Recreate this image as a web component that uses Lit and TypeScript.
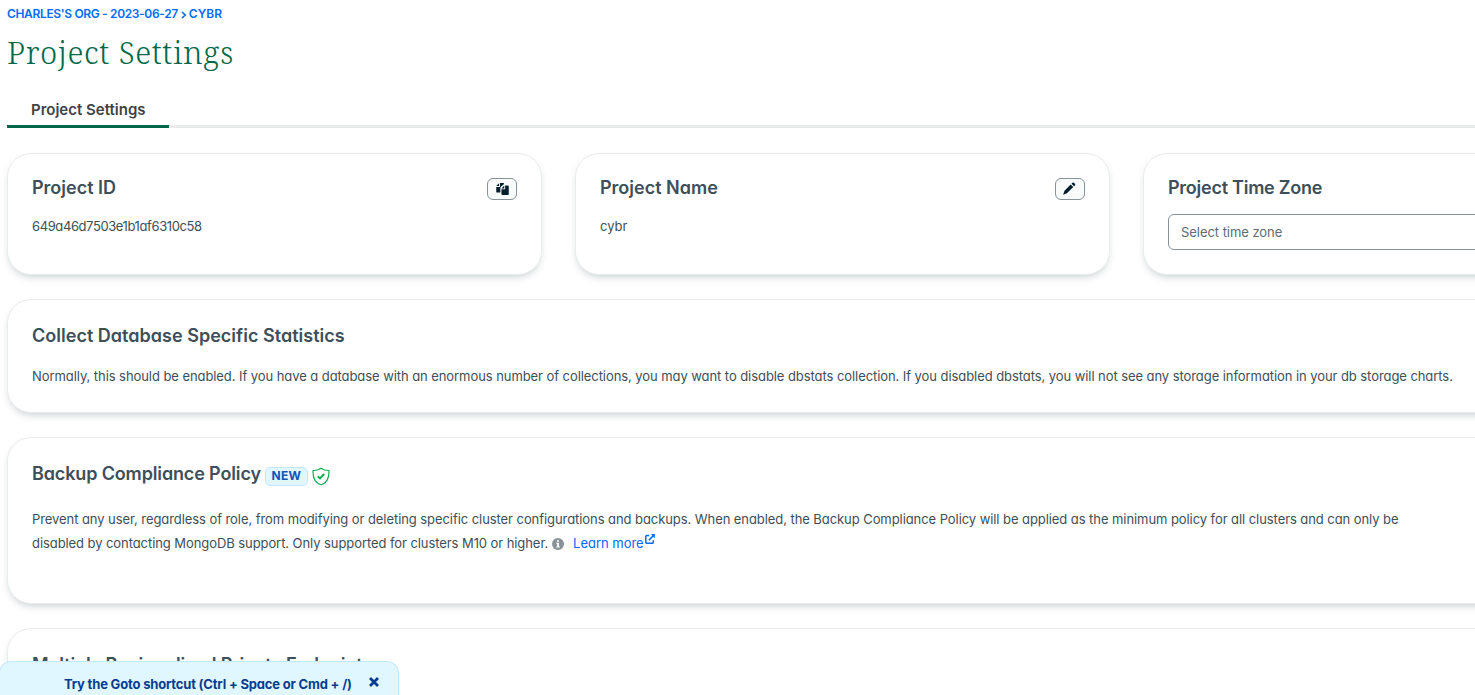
import { LitElement, html, css, svg } from "lit";
import { customElement } from "lit/decorators.js";

const copyIcon = svg`
  <path d="M0 3 2.8 .2V3Z M3.7 0H7Q7.9 0 7.9 1L4.9 3.4 4.1 4.4V9.6H.9Q0 9.6 0 8.7V3.9H3.7Z" />
  <path d="M5.2 5.4 8 2.6V5.4Z M8.9 2.4H11.6Q12.5 2.4 12.5 3.3V11.1Q12.5 12 11.6 12H6.1Q5.2 12 5.2 11.1V6.3H8.9Z" />`;

@customElement("settings-card")
class SettingsCard extends LitElement {
  static styles = css`
    :host {
      display: block;
      box-sizing: border-box;
      background: #fff;
      border: 1px solid #e8edeb;
      border-radius: 24px;
      box-shadow: 0 4px 10px -4px rgba(0, 30, 43, 0.3);
    }
  `;
  render() {
    return html`<slot></slot>`;
  }
}

@customElement("app-root")
class AppRoot extends LitElement {
  static styles = css`
    :host {
      display: block;
      position: relative;
      box-sizing: border-box;
      width: 100%;
      height: 695px;
      overflow: hidden;
      padding: 6px 0 0 7px;
      background: #fff;
      color: #3d4f58;
      font-family: Inter, "Liberation Sans", sans-serif;
      font-size: 13px;
      line-height: 20px;
      font-feature-settings: "cv11";
      white-space: nowrap;
    }
    svg { display: block; flex: none; }
    a { color: #016bf8; text-decoration: none; }
    .crumbs {
      display: flex;
      align-items: center;
      height: 16px;
      line-height: 16px;
      font-size: 12px;
      font-weight: 600;
      color: #016bf8;
    }
    .org { letter-spacing: -0.35px; }
    .crumbs svg { margin: 1px 2px 0 3px; }
    h1 {
      margin: 10px 0 0;
      font: 350 31px/40px "Noto Serif", "Liberation Serif", serif;
      letter-spacing: 0.6px;
      color: #00684a;
    }
    .tabs {
      display: flex;
      margin-top: 27px;
      width: 1671px;
      box-shadow: inset 0 -3px #e8edeb;
    }
    .tab {
      box-sizing: border-box;
      width: 162px;
      height: 29px;
      padding: 1px 0 0 24px;
      border-bottom: 3px solid #00684a;
      font-size: 15px;
      font-weight: 600;
      color: #3f4347;
    }
    .page {
      display: flex;
      flex-direction: column;
      gap: 24px;
      width: 1671px;
      margin-top: 25px;
    }
    .row {
      display: grid;
      grid-template-columns: repeat(3, 535px);
      gap: 33px;
    }
    .small { height: 122px; padding: 24px; }
    .stats { height: 114px; padding: 26px 24px; }
    .backup { height: 167px; padding: 26px 24px; }
    .endpoints { height: 167px; padding: 26px 24px; }
    .head { display: flex; justify-content: space-between; height: 20px; }
    h2 {
      margin: 0;
      font-size: 18px;
      line-height: 20px;
      font-weight: 600;
    }
    .zone { letter-spacing: -0.25px; }
    .wide { letter-spacing: 0.02px; }
    .narrow { letter-spacing: -0.14px; }
    .icon-button {
      display: flex;
      align-items: center;
      justify-content: center;
      box-sizing: border-box;
      width: 30px;
      height: 22px;
      padding: 0;
      background: #f9fbfa;
      border: 1px solid #889397;
      border-radius: 6px;
      color: #001e2b;
    }
    .value { margin-top: 18px; }
    .id { letter-spacing: -0.4px; }
    .select {
      box-sizing: border-box;
      height: 36px;
      margin-top: 16px;
      padding: 0 12px;
      border: 1px solid #889397;
      border-radius: 6px;
      line-height: 34px;
      color: #5c6c75;
      letter-spacing: -0.05px;
    }
    .copy { margin-top: 18px; line-height: 24px; letter-spacing: -0.07px; }
    .title { display: flex; height: 20px; }
    .badge {
      box-sizing: border-box;
      width: 43px;
      height: 19px;
      margin: 3px 4px 0 4px;
      border: 1px solid #c3e7fe;
      border-radius: 5px;
      background: #e1f7ff;
      color: #1254b7;
      text-align: center;
      font-size: 12px;
      font-weight: 700;
      line-height: 16px;
      letter-spacing: 0.3px;
    }
    .shield { margin-top: 3px; }
    .policy { margin-top: 23px; line-height: 24px; letter-spacing: -0.07px; }
    .line { display: flex; height: 24px; }
    .line span { letter-spacing: -0.075px; }
    .info { margin: 7px 9px 0 4px; }
    .line a { letter-spacing: -0.02px; }
    .external { margin: 3px 0 0 1px; }
    .toast {
      position: absolute;
      left: -1px;
      bottom: 0;
      display: flex;
      box-sizing: border-box;
      width: 400px;
      height: 34px;
      padding: 12px 0 0 64px;
      border: 1px solid #c3e7fe;
      border-bottom: 0;
      border-radius: 12px 12px 0 0;
      background: #e1f7ff;
      color: #083c90;
      font-weight: 700;
      letter-spacing: -0.18px;
    }
    .toast svg { margin: 3px 0 0 17px; }
  `;

  render() {
    return html`
      <nav class="crumbs">
        <span class="org">CHARLES'S ORG - 2023-06-27</span>
        <svg width="6" height="8" viewBox="0 0 6 8" fill="none" stroke="currentColor" stroke-width="1.6"><path d="M1 1 4.3 4 1 7" /></svg>
        <span>CYBR</span>
      </nav>
      <h1>Project Settings</h1>
      <div class="tabs"><div class="tab">Project Settings</div></div>
      <main class="page">
        <div class="row">
          <settings-card class="small">
            <div class="head">
              <h2>Project ID</h2>
              <button class="icon-button" aria-label="Copy">
                <svg width="13" height="12" viewBox="0 0 12.5 12" fill="currentColor">${copyIcon}</svg>
              </button>
            </div>
            <div class="value id">649a46d7503e1b1af6310c58</div>
          </settings-card>
          <settings-card class="small">
            <div class="head">
              <h2>Project Name</h2>
              <button class="icon-button" aria-label="Edit">
                <svg width="14" height="14" viewBox="0.8 0.4 14 14" fill="currentColor"><path d="M8.5 2.9 11.1 5.5 4.7 11.7 .9 13.1 2.3 9.1Z M9.3 2.1 10.3 1.1Q11 .5 11.7 1.1L12.9 2.3Q13.4 3 12.9 3.7L11.9 4.7Z" /></svg>
              </button>
            </div>
            <div class="value">cybr</div>
          </settings-card>
          <settings-card class="small">
            <div class="head"><h2 class="zone">Project Time Zone</h2></div>
            <div class="select">Select time zone</div>
          </settings-card>
        </div>
        <settings-card class="stats">
          <h2 class="wide">Collect Database Specific Statistics</h2>
          <div class="copy">Normally, this should be enabled. If you have a database with an enormous number of collections, you may want to disable dbstats collection. If you disabled dbstats, you will not see any storage information in your db storage charts.</div>
        </settings-card>
        <settings-card class="backup">
          <div class="title">
            <h2 class="narrow">Backup Compliance Policy</h2>
            <span class="badge">NEW</span>
            <svg class="shield" width="18" height="19" viewBox="0 0 18 19" fill="none" stroke="#13aa52">
              <path d="M9 1.2C6.8 2.8 4 3.6 1 3.5 .7 10.8 3 16 9 17.8 15 16 17.3 10.8 17 3.5 14 3.6 11.2 2.8 9 1.2Z" stroke-width="1.2" stroke-linejoin="round" />
              <path d="M5.8 9.3 8 11.4 12.2 7" stroke-width="2" />
            </svg>
          </div>
          <div class="policy">
            <div>Prevent any user, regardless of role, from modifying or deleting specific cluster configurations and backups. When enabled, the Backup Compliance Policy will be applied as the minimum policy for all clusters and can only be</div>
            <div class="line">
              <span>disabled by contacting MongoDB support. Only supported for clusters M10 or higher.</span>
              <svg class="info" width="12" height="12" viewBox="0 0 12 12">
                <circle cx="6" cy="6" r="6" fill="#889397" />
                <path d="M5 2.2H7V3.8H5Z M4.4 4.8H7V8.4H7.8V9.6H4.2V8.4H5.2V6H4.4Z" fill="#fff" />
              </svg>
              <a>Learn more</a>
              <svg class="external" width="10" height="10" viewBox="0 0 10 10" fill="none" stroke="#016bf8" stroke-width="1.5">
                <path d="M4.2 1.5H1.7Q.8 1.5 .8 2.4V8.3Q.8 9.2 1.7 9.2H7.4Q8.3 9.2 8.3 8.3V6.2" />
                <path d="M3.9 6.1 8.3 1.7" />
                <path d="M5.8 .1H9.9V4.2Z" fill="#016bf8" stroke="none" />
              </svg>
            </div>
          </div>
        </settings-card>
        <settings-card class="endpoints"><h2 class="narrow">Multiple Regionalized Private Endpoints</h2></settings-card>
      </main>
      <div class="toast">
        <span>Try the Goto shortcut (Ctrl + Space or Cmd + /)</span>
        <svg width="10" height="10" viewBox="0 0 10 10" fill="none" stroke="currentColor" stroke-width="2.8"><path d="M1 1 9 9M9 1 1 9" /></svg>
      </div>
    `;
  }
}
